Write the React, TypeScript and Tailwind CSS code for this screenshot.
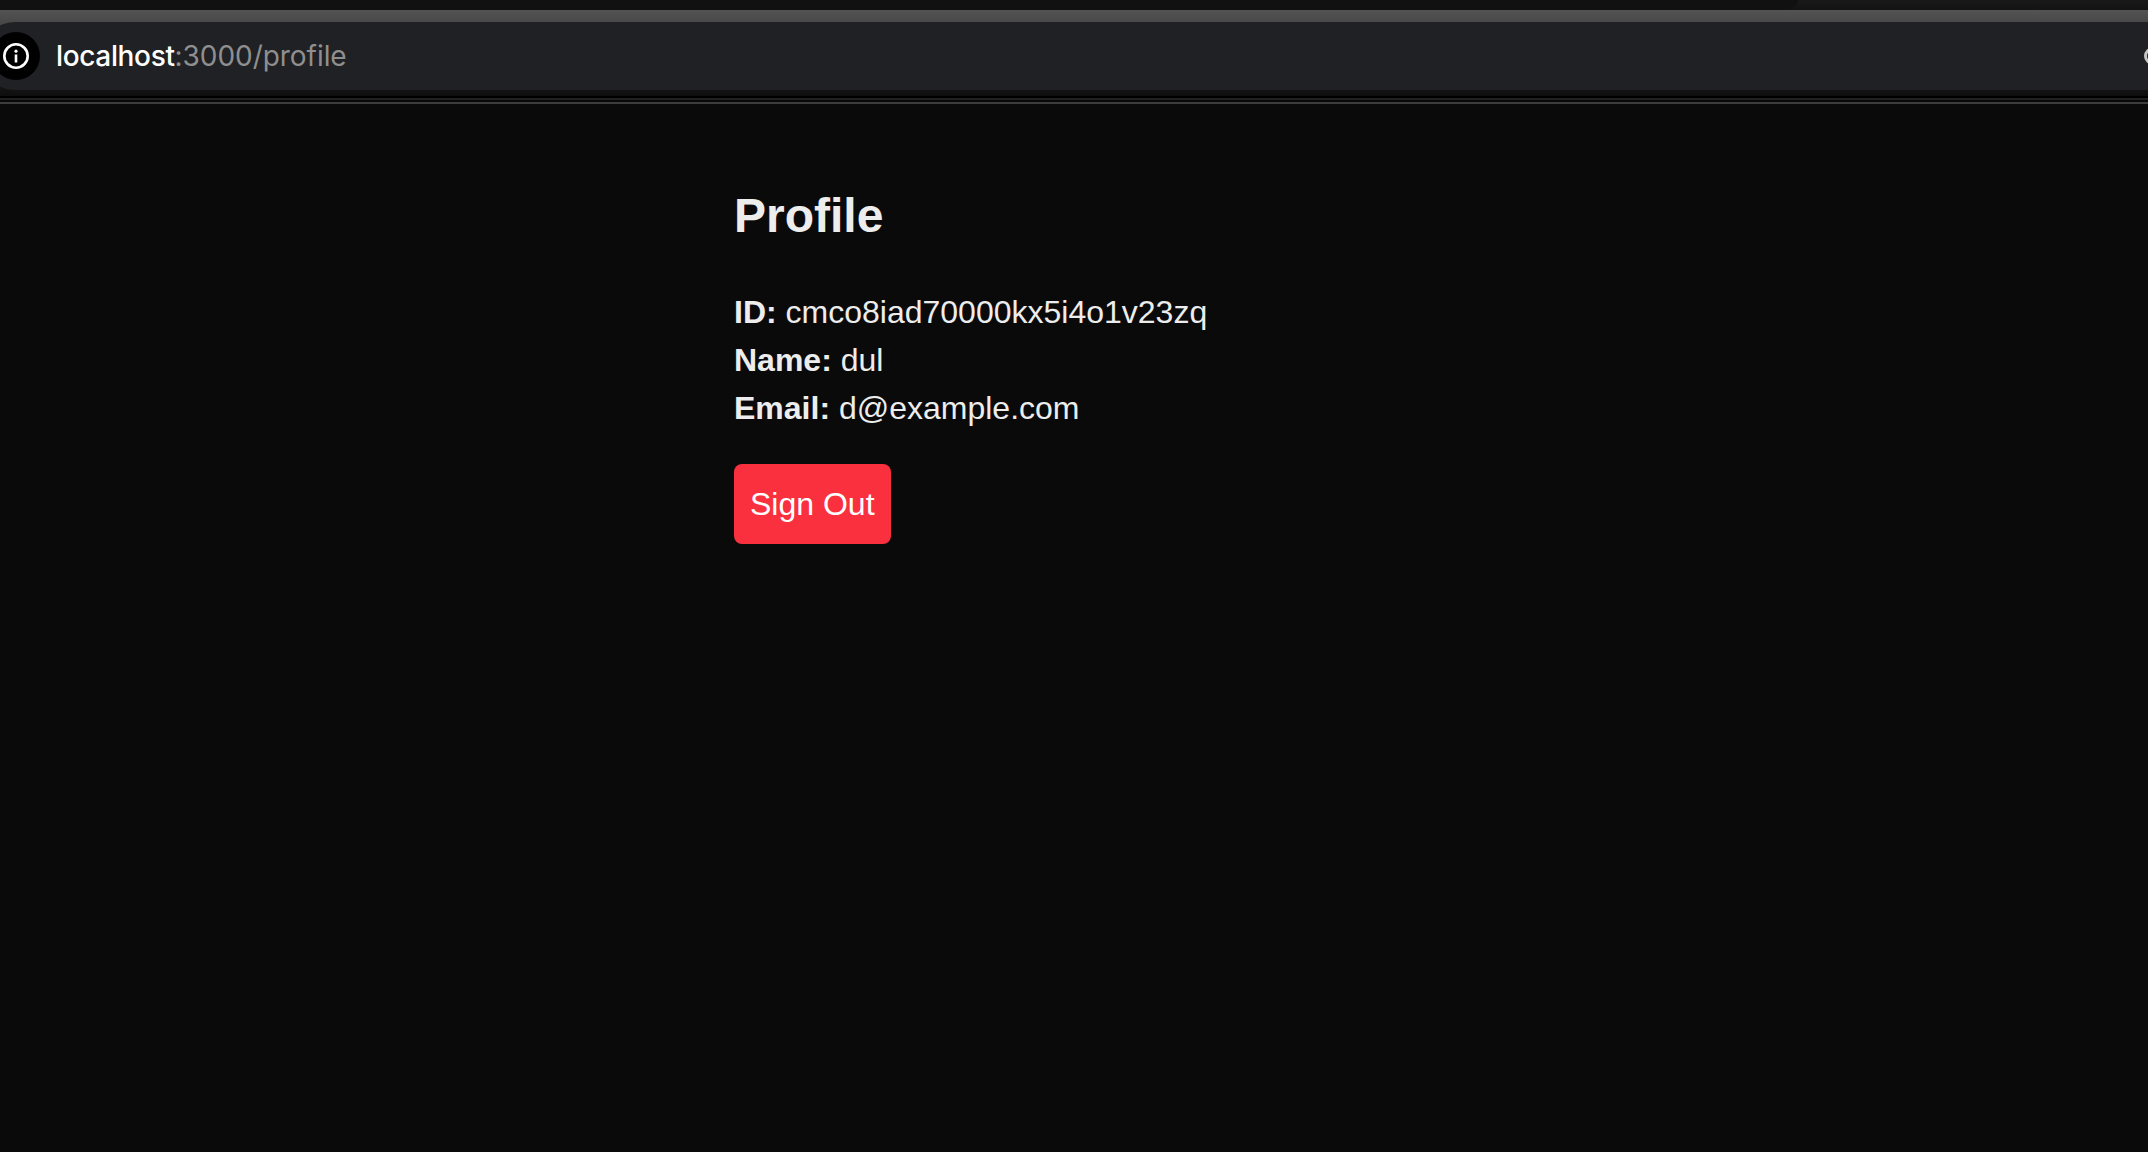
function InfoIcon() {
  return (
    <svg width="26" height="26" viewBox="0 0 26 26" fill="none" className="shrink-0">
      <circle cx="13" cy="13" r="11.7" stroke="#fff" strokeWidth="2.6" />
      <circle cx="13" cy="8.2" r="1.6" fill="#fff" />
      <rect x="11.7" y="11.5" width="2.6" height="8" fill="#fff" />
    </svg>
  );
}

function SearchIcon() {
  return (
    <svg width="4" height="20" viewBox="0 0 4 20" fill="none" className="shrink-0">
      <circle cx="8.5" cy="10" r="7" stroke="#c7c7c7" strokeWidth="3" />
    </svg>
  );
}

function BrowserChrome() {
  return (
    <header className="flex h-[104px] flex-col">
      <div className="flex h-[10px] justify-end overflow-hidden bg-linear-to-b from-[#191919] to-[#131313]">
        <div className="h-[10px] grow rounded-br-[18px_12px] bg-[#111111]" />
        <div className="w-[350px]" />
      </div>
      <div className="h-[86px] overflow-hidden bg-linear-to-b from-[#535353] to-[#0e0e0e] pt-3">
        <div className="-ml-[19px] flex h-[68px] items-center rounded-l-full bg-[#202124] pl-[11px]">
          <div className="flex size-12 shrink-0 items-center justify-center rounded-full bg-black">
            <InfoIcon />
          </div>
          <div className="ml-4 grow font-['Inter',sans-serif] text-[28px] leading-[34px] tracking-[-0.05px] text-[#8f8f8f]">
            <span className="font-medium tracking-[-0.35px] text-white">localhost</span>:3000/profile
          </div>
          <SearchIcon />
        </div>
      </div>
      <div className="h-0.5 bg-black" />
      <div className="h-0.5 bg-[#202020]" />
      <div className="h-0.5 bg-[#080808]" />
      <div className="h-0.5 bg-[#3c3c3c]" />
    </header>
  );
}

const fields = [
  { label: "ID:", value: "cmco8iad70000kx5i4o1v23zq" },
  { label: "Name:", value: "dul" },
  { label: "Email:", value: "d@example.com" },
];

export default function App() {
  return (
    <div className="flex h-[1152px] w-[2148px] flex-col overflow-hidden bg-[#0a0a0a] font-['Liberation_Sans',Arial,sans-serif] text-[#ededed]">
      <BrowserChrome />
      <main className="flex flex-col items-start pt-20 pl-[734px]">
        <h1 className="text-[48px] leading-[64px] font-bold">Profile</h1>
        <div className="mt-10 text-[32px] leading-[48px]">
          {fields.map((f) => (
            <p key={f.label}>
              <strong>{f.label}</strong> {f.value}
            </p>
          ))}
        </div>
        <button className="mt-8 rounded-lg bg-[#fa303e] p-4 text-[32px] leading-[48px] text-white">
          Sign Out
        </button>
      </main>
    </div>
  );
}
